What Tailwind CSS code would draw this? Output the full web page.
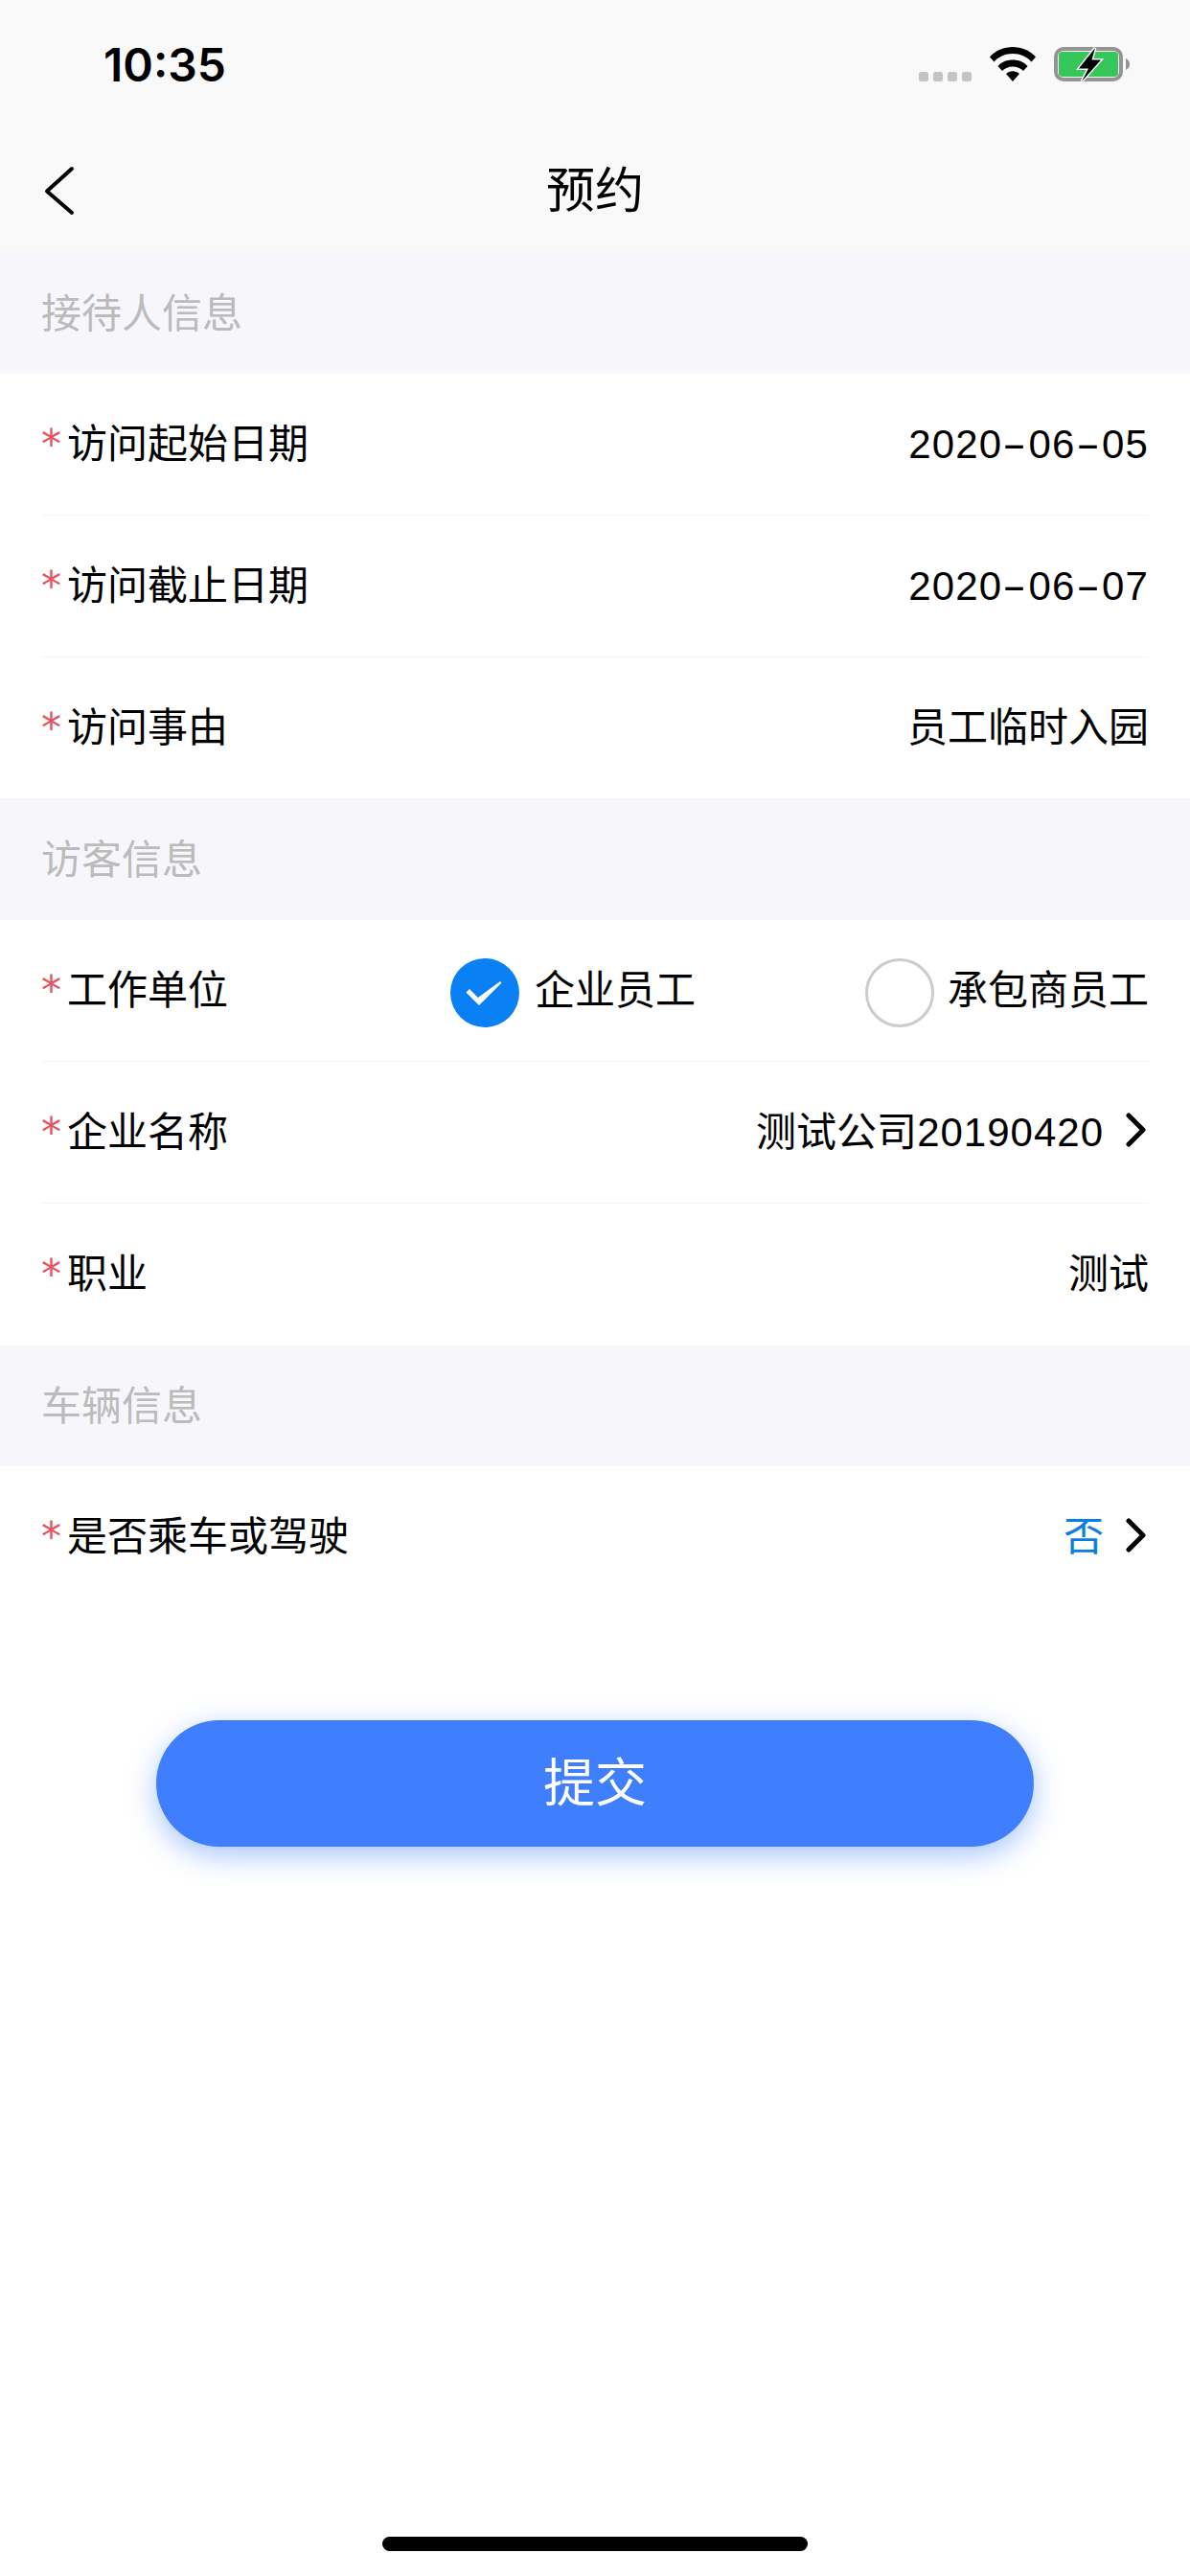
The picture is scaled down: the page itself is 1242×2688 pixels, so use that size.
<!DOCTYPE html>
<html>
<head>
<meta charset="utf-8">
<script src="https://cdn.jsdelivr.net/npm/@tailwindcss/browser@4"></script>
</head>
<body class="bg-white">
<div class="relative w-[1242px] h-[2688px] bg-white text-black text-[42px] leading-[60px] font-['Liberation_Sans','Noto_Sans_CJK_SC',sans-serif]">
  <div class="h-[132px] bg-[#f9f9f9] flex justify-between items-start">
    <div class="ml-[108px] mt-[37px] text-[48px] leading-[62px] font-semibold font-['Inter',sans-serif]">10:35</div>
    <div class="flex items-start mr-[62px] mt-[48px]">
      <svg width="55" height="10" viewBox="0 0 55 10" class="mt-[27px] mr-[19px]"><g fill="#c4c4c4"><rect x="0" y="0" width="10" height="10" rx="2.500"/><rect x="15" y="0" width="10" height="10" rx="2.500"/><rect x="30" y="0" width="10" height="10" rx="2.500"/><rect x="45" y="0" width="10" height="10" rx="2.500"/></g></svg>
      <svg width="48" height="36" viewBox="0 0 48 36" class="mt-[1px] mr-[19px]"><path d="M0 10.500C6 3.500 15 0 24 0s18 3.500 24 10.500l-4.500 5C38.500 10 32 7 24 7S9.500 10 4.500 15.500z M8.500 20C12.500 15.500 18 13.500 24 13.500S35.500 15.500 39.500 20L35 25c-3-3-6.500-4.500-11-4.500S16 22 13 25z M17 28c2-1.800 4.500-2.800 7-2.800s5 1 7 2.800l-7 8z" fill="#000"/></svg>
      <svg width="80" height="40" viewBox="0 0 80 40"><rect x="2" y="3" width="68" height="32" rx="8" fill="none" stroke="#949494" stroke-width="4"/><rect x="5" y="6" width="62" height="26" rx="4" fill="#35c759"/><path d="M75 13c2.500 1 4 3.200 4 6s-1.500 5-4 6z" fill="#949494"/><path d="M43 2L26 23.500h10L29 37 49 14.500h-9.500z" fill="#000" stroke="#f9f9f9" stroke-width="3" paint-order="stroke" stroke-linejoin="miter"/></svg>
    </div>
  </div>
  <div class="h-[131px] bg-[#f9f9f9] relative flex items-center justify-center">
    <svg width="34" height="54" viewBox="0 0 34 54" class="absolute left-[46px] top-[40px]"><path d="M29 4L3 27.500 29 50" fill="none" stroke="#000" stroke-width="4" stroke-linecap="round" stroke-linejoin="round"/></svg>
    <span class="text-[51px] mt-[4px]">预约</span>
  </div>
  <div class="h-[127px] bg-[#f7f7fb] text-[#bbbbbb] flex items-center px-[43px] pt-[2px]">接待人信息</div>
  <div class="bg-white">
    <div class="mx-[43px] h-[148px] flex items-center justify-between border-b border-[#f5f5f5]"><div class="flex items-center"><span class="w-[27px] text-[#e5545f] font-['DejaVu_Sans',sans-serif]">*</span>访问起始日期</div><div class="tracking-[1.2px]">2020<span class="inline-block scale-x-[1.8] mx-[6px]">-</span>06<span class="inline-block scale-x-[1.8] mx-[6px]">-</span>05</div></div>
    <div class="mx-[43px] h-[148px] flex items-center justify-between border-b border-[#f5f5f5]"><div class="flex items-center"><span class="w-[27px] text-[#e5545f] font-['DejaVu_Sans',sans-serif]">*</span>访问截止日期</div><div class="tracking-[1.2px]">2020<span class="inline-block scale-x-[1.8] mx-[6px]">-</span>06<span class="inline-block scale-x-[1.8] mx-[6px]">-</span>07</div></div>
    <div class="mx-[43px] h-[147px] flex items-center justify-between"><div class="flex items-center"><span class="w-[27px] text-[#e5545f] font-['DejaVu_Sans',sans-serif]">*</span>访问事由</div><div>员工临时入园</div></div>
  </div>
  <div class="h-[127px] bg-[#f7f7fb] text-[#bbbbbb] flex items-center px-[43px] pt-[2px]">访客信息</div>
  <div class="bg-white">
    <div class="mx-[43px] h-[148px] flex items-center border-b border-[#f5f5f5]">
      <div class="flex items-center flex-1"><span class="w-[27px] text-[#e5545f] font-['DejaVu_Sans',sans-serif]">*</span>工作单位</div>
      <div class="flex items-center w-[433px]">
        <svg width="72" height="72" viewBox="0 0 72 72" class="mt-[4px] mr-[16px]"><circle cx="36" cy="36" r="36" fill="#0a80f5"/><path d="M16.500 35.500L20 32l9 9L52 24l1.500 1.500L30 49z" fill="#fff"/></svg>
        <span>企业员工</span>
      </div>
      <div class="flex items-center">
        <div class="mt-[4px] w-[72px] h-[72px] rounded-full border-[3px] border-[#cccccc] mr-[14px]"></div>
        <span>承包商员工</span>
      </div>
    </div>
    <div class="mx-[43px] h-[148px] flex items-center justify-between border-b border-[#f5f5f5]"><div class="flex items-center"><span class="w-[27px] text-[#e5545f] font-['DejaVu_Sans',sans-serif]">*</span>企业名称</div><div class="flex items-center"><span>测试公司<span class="tracking-[1px]">20190420</span></span><svg width="24" height="36" viewBox="0 0 24 36" class="ml-[23px] mb-[5px]"><path d="M3 3l15 15L3 33" fill="none" stroke="#000" stroke-width="5" stroke-linecap="round" stroke-linejoin="round"/></svg></div></div>
    <div class="mx-[43px] h-[148px] flex items-center justify-between"><div class="flex items-center"><span class="w-[27px] text-[#e5545f] font-['DejaVu_Sans',sans-serif]">*</span>职业</div><div>测试</div></div>
  </div>
  <div class="h-[126px] bg-[#f7f7fb] text-[#bbbbbb] flex items-center px-[43px] pt-[2px]">车辆信息</div>
  <div class="mx-[43px] h-[148px] flex items-center justify-between"><div class="flex items-center"><span class="w-[27px] text-[#e5545f] font-['DejaVu_Sans',sans-serif]">*</span>是否乘车或驾驶</div><div class="flex items-center text-[#0a7ee8]"><span>否</span><svg width="24" height="36" viewBox="0 0 24 36" class="ml-[23px] mb-[5px]"><path d="M3 3l15 15L3 33" fill="none" stroke="#000" stroke-width="5" stroke-linecap="round" stroke-linejoin="round"/></svg></div></div>
  <div class="mt-[117px] ml-[163px] w-[916px] h-[132px] rounded-full bg-[#3f7efc] text-white text-[54px] flex items-center justify-center shadow-[0_9px_30px_rgba(63,126,252,0.45)]">提交</div>
  <div class="absolute left-[399px] top-[2647px] w-[444px] h-[15px] rounded-full bg-black"></div>
</div>
</body>
</html>
